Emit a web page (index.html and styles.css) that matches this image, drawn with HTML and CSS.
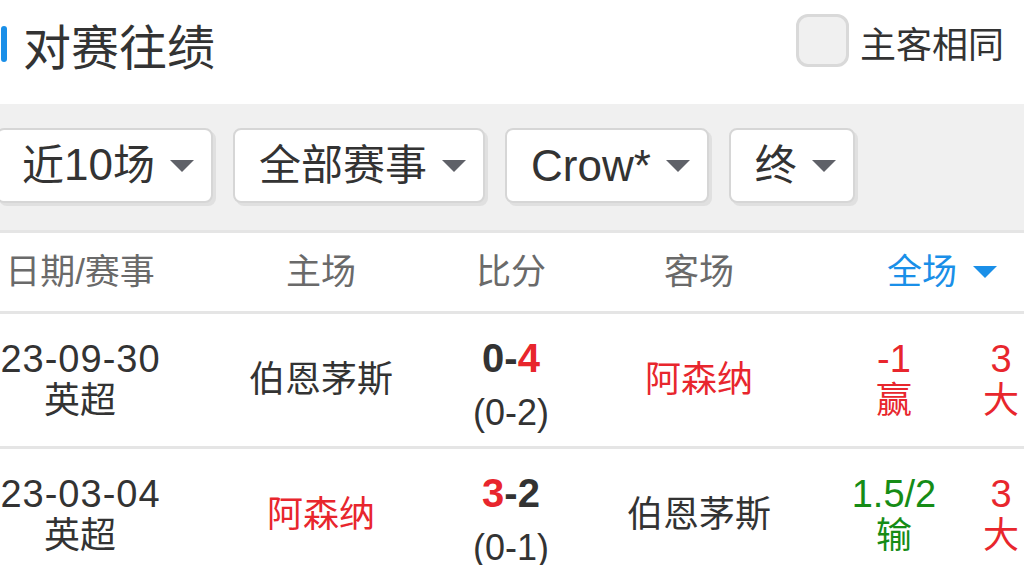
FILE: index.html
```html
<!DOCTYPE html>
<html lang="zh">
<head>
<meta charset="utf-8">
<link rel="stylesheet" href="styles.css">
</head>
<body>
<div class="page">
  <div class="topbar">
    <div class="title"><span class="title-mark"></span><span class="title-text">对赛往绩</span></div>
    <label class="same">
      <span class="checkbox"></span>
      <span class="same-text">主客相同</span>
    </label>
  </div>

  <div class="filters">
    <div class="filter-row">
      <div class="select"><span>近<span class="lat">10</span>场</span><i class="caret"></i></div>
      <div class="select"><span>全部赛事</span><i class="caret"></i></div>
      <div class="select"><span class="lat">Crow*</span><i class="caret"></i></div>
      <div class="select"><span>终</span><i class="caret"></i></div>
    </div>
  </div>

  <div class="table">
    <div class="thead">
      <div class="cell">日期/赛事</div>
      <div class="cell">主场</div>
      <div class="cell">比分</div>
      <div class="cell">客场</div>
      <div class="cell span2 active">全场<i class="caret caret-blue"></i></div>
    </div>

    <div class="trow">
      <div class="cell stack"><span class="num date">23-09-30</span><span>英超</span></div>
      <div class="cell">伯恩茅斯</div>
      <div class="cell stack score-cell"><span class="score"><span>0</span>-<span class="red">4</span></span><span class="half">(0-2)</span></div>
      <div class="cell red">阿森纳</div>
      <div class="cell stack red"><span class="num">-1</span><span>赢</span></div>
      <div class="cell stack red"><span class="num">3</span><span>大</span></div>
    </div>

    <div class="trow">
      <div class="cell stack"><span class="num date">23-03-04</span><span>英超</span></div>
      <div class="cell red">阿森纳</div>
      <div class="cell stack score-cell"><span class="score"><span class="red">3</span>-<span>2</span></span><span class="half">(0-1)</span></div>
      <div class="cell">伯恩茅斯</div>
      <div class="cell stack green"><span class="num">1.5/2</span><span>输</span></div>
      <div class="cell stack red"><span class="num">3</span><span>大</span></div>
    </div>
  </div>
</div>
</body>
</html>
```

FILE: styles.css
```css
html, body {
  margin: 0;
  padding: 0;
  background: #ffffff;
  overflow: hidden;
}

body {
  font-family: "Liberation Sans", "Noto Sans CJK SC", sans-serif;
  color: #333333;
}

.page {
  width: 1024px;
}

/* top bar */
.topbar {
  height: 104px;
  display: flex;
  justify-content: space-between;
  align-items: flex-start;
  padding-right: 20px;
}

.title {
  display: flex;
  align-items: center;
  margin-top: 20px;
  padding-left: 1px;
}

.title-mark {
  width: 6px;
  height: 36px;
  border-radius: 3px;
  background: #1a8fe8;
  margin-right: 16px;
}

.title-text {
  font-family: "Noto Sans CJK SC", sans-serif;
  font-size: 48px;
  line-height: 48px;
  color: #333333;
}

.same {
  display: flex;
  align-items: center;
  margin-top: 14px;
}

.checkbox {
  width: 47px;
  height: 47px;
  border: 3px solid #d9d9d9;
  border-radius: 12px;
  background: #f0f0f0;
}

.same-text {
  font-family: "Noto Sans CJK SC", sans-serif;
  font-size: 36px;
  line-height: 36px;
  margin-left: 11px;
  padding-top: 2px;
  color: #333333;
}

/* filters */
.filters {
  height: 126px;
  background: #f0f0f0;
  padding-top: 24px;
  box-sizing: border-box;
}

.filter-row {
  display: flex;
  gap: 20px;
  margin-left: -4px;
}

.select {
  height: 75px;
  box-sizing: border-box;
  display: flex;
  align-items: center;
  padding: 0 17px 0 24px;
  background: #ffffff;
  border: 2px solid #d6d6d6;
  border-radius: 8px;
  box-shadow: 3px 3px 0 #e0e0e0;
  font-size: 42px;
  color: #333333;
}

.select span {
  line-height: 42px;
}

.lat {
  font-size: 44px;
}

.caret {
  display: inline-block;
  width: 0;
  height: 0;
  border-left: 12px solid transparent;
  border-right: 12px solid transparent;
  border-top: 12px solid #5f6168;
  margin-left: 15px;
}

.caret-blue {
  border-top-color: #1a8fe8;
  margin-left: 16px;
}

/* table */
.table {
  width: 1072px;
  margin-left: -20px;
  border-top: 3px solid #e5e5e5;
}

.thead,
.trow {
  display: grid;
  grid-template-columns: 200px 282px 98px 278px 112px 102px;
  border-bottom: 3px solid #e5e5e5;
}

.thead {
  height: 78px;
  font-size: 35px;
  color: #6a6a6a;
}

.trow {
  height: 132px;
  font-size: 36px;
  color: #333333;
}

.cell {
  display: flex;
  align-items: center;
  justify-content: center;
  white-space: nowrap;
  line-height: 42px;
}

.span2 {
  grid-column: span 2;
  padding-right: 6px;
}

.active {
  color: #1a8fe8;
}

.stack {
  flex-direction: column;
}

.num {
  font-size: 38px;
}

.date {
  letter-spacing: 1px;
  margin-right: -1px;
}

.score-cell {
  padding-top: 10px;
  gap: 9px;
}

.score-cell > span {
  line-height: 46px;
}

.score {
  font-weight: bold;
  font-size: 40px;
}

.half {
  font-size: 36px;
}

.red {
  color: #e8262d;
}

.green {
  color: #168c16;
}
```
